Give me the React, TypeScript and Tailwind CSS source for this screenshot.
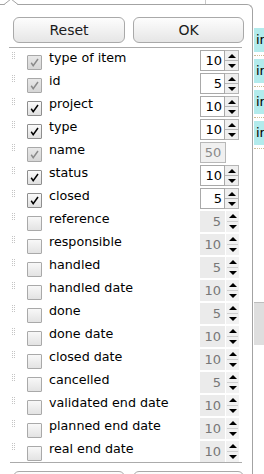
import React from "react";

type Row = {
  label: string;
  checked: boolean;
  lockedCheck?: boolean;
  value: number;
  mode: "spin" | "fixed" | "disabled";
};

const rows: Row[] = [
  { label: "type of item", checked: true, lockedCheck: true, value: 10, mode: "spin" },
  { label: "id", checked: true, lockedCheck: true, value: 5, mode: "spin" },
  { label: "project", checked: true, value: 10, mode: "spin" },
  { label: "type", checked: true, value: 10, mode: "spin" },
  { label: "name", checked: true, lockedCheck: true, value: 50, mode: "fixed" },
  { label: "status", checked: true, value: 10, mode: "spin" },
  { label: "closed", checked: true, value: 5, mode: "spin" },
  { label: "reference", checked: false, value: 5, mode: "disabled" },
  { label: "responsible", checked: false, value: 10, mode: "disabled" },
  { label: "handled", checked: false, value: 5, mode: "disabled" },
  { label: "handled date", checked: false, value: 10, mode: "disabled" },
  { label: "done", checked: false, value: 5, mode: "disabled" },
  { label: "done date", checked: false, value: 10, mode: "disabled" },
  { label: "closed date", checked: false, value: 10, mode: "disabled" },
  { label: "cancelled", checked: false, value: 5, mode: "disabled" },
  { label: "validated end date", checked: false, value: 10, mode: "disabled" },
  { label: "planned end date", checked: false, value: 10, mode: "disabled" },
  { label: "real end date", checked: false, value: 10, mode: "disabled" },
];

function Up() {
  return (
    <svg width="8" height="4" viewBox="0 0 8 4">
      <polygon points="0,4 4,0 8,4" fill="#000" />
    </svg>
  );
}
function Down() {
  return (
    <svg width="8" height="4" viewBox="0 0 8 4">
      <polygon points="0,0 8,0 4,4" fill="#000" />
    </svg>
  );
}

function Handle() {
  return (
    <div className="grid grid-cols-2 gap-[1px] w-[3px] mt-[4px] shrink-0">
      {Array.from({ length: 8 }).map((_, i) => (
        <div key={i} className="w-[1px] h-[1px] bg-[#c4c4c4]" />
      ))}
    </div>
  );
}

function Check({ checked, locked }: { checked: boolean; locked?: boolean }) {
  const box = locked
    ? "border-[#a8a8a8] bg-gradient-to-b from-[#e8e8e8] to-[#d6d6d6]"
    : checked
    ? "border-[#8e8e8e] bg-gradient-to-b from-[#fbfbfb] to-[#e0e0e0]"
    : "border-[#a9a9a9] bg-gradient-to-b from-[#f8f8f8] to-[#e3e3e3]";
  return (
    <div className={`w-[15px] h-[15px] mt-[7px] border rounded-[1px] flex items-center justify-center ${box}`}>
      {checked && (
        <svg width="13" height="13" viewBox="0 0 13 13">
          <path
            d="M3.2 6.8 L5.2 9.6 L10 3"
            fill="none"
            stroke={locked ? "#8a8a8a" : "#000"}
            strokeWidth="1.5"
          />
        </svg>
      )}
    </div>
  );
}

function NumBox({ row }: { row: Row }) {
  if (row.mode === "fixed") {
    return (
      <div className="w-[26px] h-[21px] border border-[#b8b8b8] bg-[#f0f0f0] text-[#8a8a8a] text-[13px] leading-[19px] text-center">
        {row.value}
      </div>
    );
  }
  if (row.mode === "disabled") {
    return (
      <div className="flex h-[21px] w-[39px]">
        <div className="w-[25px] bg-[#ebebeb] text-[#777] text-[13px] leading-[21px] text-right pr-[4px]">
          {row.value}
        </div>
        <div className="w-[14px] flex flex-col bg-[#f2f2f2] border-l border-[#ffffff]">
          <div className="h-[10px] flex items-center justify-center">
            <Up />
          </div>
          <div className="h-[1px] bg-[#cfcfcf] mx-[1px]" />
          <div className="h-[10px] flex items-center justify-center">
            <Down />
          </div>
        </div>
      </div>
    );
  }
  return (
    <div className="flex h-[21px] w-[39px]">
      <div className="w-[25px] border border-[#a9a9a9] bg-white text-black text-[13px] leading-[19px] text-right pr-[2px]">
        {row.value}
      </div>
      <div className="w-[14px] flex flex-col border border-l-0 border-[#b5b5b5] bg-[#efefef]">
        <div className="h-[9px] flex items-center justify-center">
          <Up />
        </div>
        <div className="h-[1px] bg-[#b5b5b5]" />
        <div className="h-[9px] flex items-center justify-center">
          <Down />
        </div>
      </div>
    </div>
  );
}

function Btn({ label, w }: { label: string; w: string }) {
  return (
    <div
      className={`${w} h-[26px] shrink-0 rounded-[6px] border border-[#a9a9a9] bg-gradient-to-b from-[#fdfdfd] to-[#e6e6e6] flex items-center justify-center text-[14px] text-[#1b1b1b]`}
    >
      {label}
    </div>
  );
}

export default function App() {
  return (
    <div
      className="w-[264px] h-[474px] overflow-hidden bg-white relative flex items-start"
      style={{ fontFamily: '"DejaVu Sans", Verdana, sans-serif' }}
    >
      <div className="w-[253px] shrink-0 flex flex-col">
        <div className="h-[4px] shrink-0 flex">
          <div className="w-[206px] border-r border-[#c8c8c8]" />
        </div>
        <div className="shrink-0 flex flex-col bg-white border-t border-r border-[#a3a3a3] rounded-tr-[6px]">
          <div className="flex gap-[8px] pl-[13px] pt-[12px] shrink-0">
            <Btn label="Reset" w="w-[112px]" />
            <Btn label="OK" w="w-[111px]" />
          </div>
          <div className="mt-[4px] ml-[9px] w-[233px] h-[1px] shrink-0 bg-[#ababab]" />
          <div className="flex flex-col shrink-0">
            {rows.map((r) => (
              <div key={r.label} className="h-[23px] shrink-0 flex items-start pl-[12px]">
                <Handle />
                <div className="ml-[12px] shrink-0">
                  <Check checked={r.checked} locked={r.lockedCheck} />
                </div>
                <div className="ml-[7px] mt-[1px] flex-1 text-[12.7px] leading-[18px] text-black whitespace-nowrap">
                  {r.label}
                </div>
                <div className="w-[39px] shrink-0 mr-[13px] mt-[2px]">
                  <NumBox row={r} />
                </div>
              </div>
            ))}
          </div>
          <div className="ml-[10px] w-[232px] h-[1px] shrink-0 bg-[#ababab]" />
          <div className="flex gap-[8px] pl-[13px] mt-[8px] shrink-0">
            <Btn label="" w="w-[112px]" />
            <Btn label="" w="w-[111px]" />
          </div>
        </div>
      </div>
      <div className="flex-1 flex flex-col pt-[25px] pl-[1px]">
        {[0, 1, 2, 3].map((i) => (
          <div key={i} className="h-[31px] shrink-0 border-b border-dotted border-[#cbbd96] pt-[3px] pb-[3px]">
            <div className="h-full bg-[#b2ebec] flex items-center pl-[2px] text-[13px] text-black overflow-hidden whitespace-nowrap">
              in
            </div>
          </div>
        ))}
        <div className="h-[153px] shrink-0" />
        <div className="h-[43px] shrink-0 bg-[#dedede] border-t border-[#bdbdbd]" />
      </div>
      <svg
        className="absolute left-[4px] top-0"
        width="15"
        height="6"
        viewBox="0 0 15 6"
      >
        <polygon points="0,5 7,-1 14,5" fill="#fff" />
        <polyline points="0,4.5 7,-1 14,4.5" fill="none" stroke="#a3a3a3" strokeWidth="1" />
      </svg>
    </div>
  );
}
